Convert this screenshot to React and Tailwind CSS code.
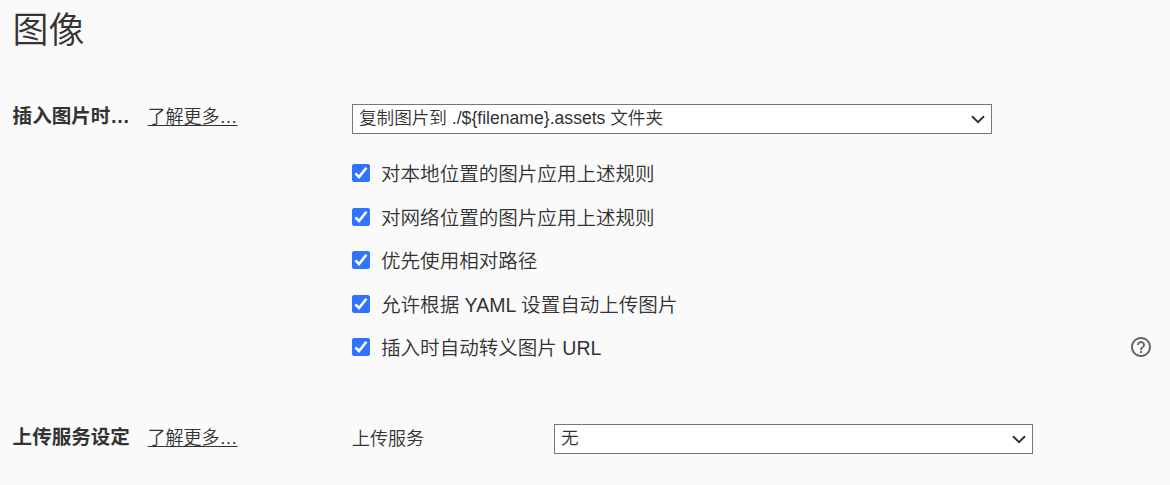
import React, { useState } from "react";

const RULES = [
    { id: "local", label: "对本地位置的图片应用上述规则" },
    { id: "network", label: "对网络位置的图片应用上述规则" },
    { id: "relative", label: "优先使用相对路径" },
    { id: "yaml", label: "允许根据 YAML 设置自动上传图片" },
    { id: "escape", label: "插入时自动转义图片 URL", help: true },
];

const Select = ({ value, onChange, options, className }) => (
    <div className={`relative h-[30px] ${className}`}>
        <select
            value={value}
            onChange={onChange}
            className="block h-full w-full appearance-none border border-[#767676] bg-white pl-[6px] pr-8 pb-[2px] text-[17.6px] leading-[26px] outline-none"
        >
            {options.map((option) => (
                <option key={option} value={option}>{option}</option>
            ))}
        </select>
        <svg
            viewBox="0 0 14 9"
            className="pointer-events-none absolute right-[7px] top-[11px] h-[9px] w-[14px]"
            fill="none"
            stroke="#333333"
            strokeWidth="2"
        >
            <path d="M1 1.2 L7 7.2 L13 1.2" />
        </svg>
    </div>
);

const Checkbox = ({ checked, onChange, label }) => (
    <label className="flex items-center">
        <span className="relative mr-[11px] block h-[18px] w-[18px]">
            <input
                type="checkbox"
                checked={checked}
                onChange={onChange}
                className="block h-[18px] w-[18px] appearance-none rounded-[2px] border border-[#767676] bg-white checked:border-[#2f74ff] checked:bg-[#2f74ff]"
            />
            {checked && (
                <svg
                    viewBox="0 0 18 18"
                    className="pointer-events-none absolute inset-0 h-[18px] w-[18px]"
                    fill="none"
                    stroke="white"
                    strokeWidth="2.6"
                >
                    <path d="M3.4 9.4 L7 13 L14.4 3.8" />
                </svg>
            )}
        </span>
        <span className="relative top-px text-[19.56px] leading-[28px]">{label}</span>
    </label>
);

const HelpIcon = () => (
    <svg viewBox="0 0 24 24" className="h-6 w-6" fill="#666666">
        <path d="M11 18h2v-2h-2v2zm1-16C6.48 2 2 6.48 2 12s4.48 10 10 10 10-4.48 10-10S17.52 2 12 2zm0 18c-4.41 0-8-3.59-8-8s3.59-8 8-8 8 3.59 8 8-3.59 8-8 8zm0-14c-2.21 0-4 1.79-4 4h2c0-1.1.9-2 2-2s2 .9 2 2c0 2-3 1.75-3 5h2c0-2.25 3-2.5 3-5 0-2.21-1.79-4-4-4z" />
    </svg>
);

const SectionLabel = ({ title }) => (
    <div className="flex h-[26px] w-[339.4px] shrink-0 items-baseline">
        <span className="w-[135px] text-[19.56px] font-bold leading-[26px]">{title}</span>
        <a href="#" className="text-[18px] leading-[26px] underline decoration-1 underline-offset-[2px]">
            了解更多…
        </a>
    </div>
);

const App = () => {
    const [insertAction, setInsertAction] = useState("复制图片到 ./${filename}.assets 文件夹");
    const [service, setService] = useState("无");
    const [checked, setChecked] = useState({
        local: true,
        network: true,
        relative: true,
        yaml: true,
        escape: true,
    });

    const toggle = (id) => setChecked({ ...checked, [id]: !checked[id] });

    return (
        <div className="h-[485px] overflow-hidden bg-[#fafafa] pl-[12.6px] pr-[17px] font-['Liberation_Sans','Noto_Sans_CJK_SC',sans-serif] font-[350] text-[#333333]">
            <h1 className="h-[104px] pt-[5px] text-[36px] leading-[52px]">图像</h1>

            {/* Insert rules */}
            <section className="flex h-[320px]">
                <div className="-mt-px">
                    <SectionLabel title="插入图片时…" />
                </div>
                <div className="flex-1">
                    <Select
                        className="w-[640px]"
                        value={insertAction}
                        onChange={(e) => setInsertAction(e.target.value)}
                        options={["复制图片到 ./${filename}.assets 文件夹"]}
                    />
                    <div className="pt-[17.5px]">
                        {RULES.map((rule) => (
                            <div key={rule.id} className="flex h-[43.5px] items-center justify-between">
                                <Checkbox
                                    label={rule.label}
                                    checked={checked[rule.id]}
                                    onChange={() => toggle(rule.id)}
                                />
                                {rule.help && <HelpIcon />}
                            </div>
                        ))}
                    </div>
                </div>
            </section>

            {/* Upload service */}
            <section className="flex">
                <SectionLabel title="上传服务设定" />
                <span className="w-[202px] text-[18px] leading-[30px]">上传服务</span>
                <Select
                    className="w-[479px]"
                    value={service}
                    onChange={(e) => setService(e.target.value)}
                    options={["无"]}
                />
            </section>
        </div>
    );
};

export default App;
